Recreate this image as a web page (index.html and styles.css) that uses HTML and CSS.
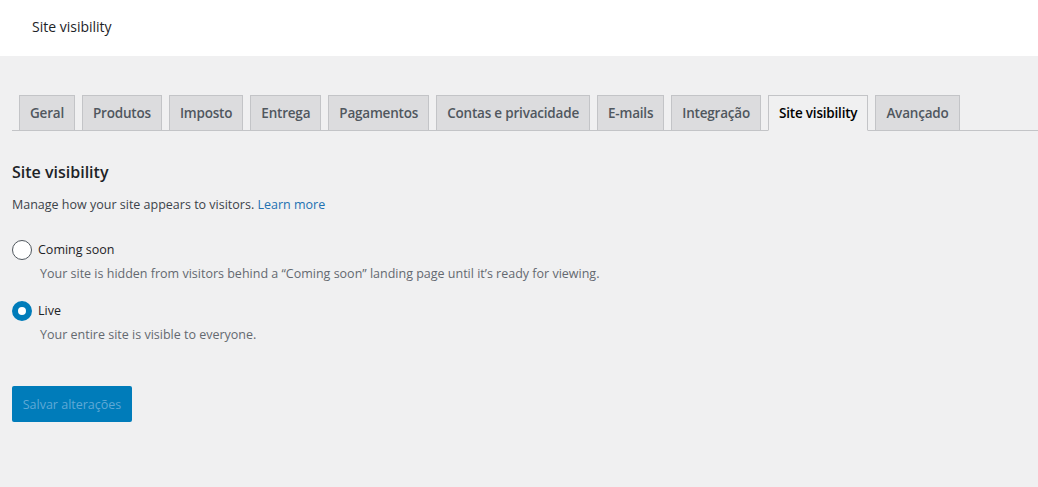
FILE: index.html
```html
<!DOCTYPE html>
<html lang="pt-BR">
<head>
    <meta charset="UTF-8">
    <title>Site visibility</title>
    <link rel="stylesheet" href="styles.css">
</head>
<body>
    <div class="topbar">
        <h1>Site visibility</h1>
    </div>

    <div class="wrap">
        <nav class="nav-tab-wrapper">
            <a class="nav-tab" href="#">Geral</a>
            <a class="nav-tab" href="#">Produtos</a>
            <a class="nav-tab" href="#">Imposto</a>
            <a class="nav-tab" href="#">Entrega</a>
            <a class="nav-tab" href="#">Pagamentos</a>
            <a class="nav-tab" href="#">Contas e privacidade</a>
            <a class="nav-tab" href="#">E-mails</a>
            <a class="nav-tab" href="#">Integração</a>
            <a class="nav-tab nav-tab-active" href="#">Site visibility</a>
            <a class="nav-tab" href="#">Avançado</a>
        </nav>

        <h2>Site visibility</h2>
        <p class="intro">Manage how your site appears to visitors. <a href="#">Learn more</a></p>

        <div class="option">
            <label><span class="radio"></span>Coming soon</label>
            <p class="desc">Your site is hidden from visitors behind a “Coming soon” landing page until it’s ready for viewing.</p>
        </div>
        <div class="option">
            <label><span class="radio checked"></span>Live</label>
            <p class="desc">Your entire site is visible to everyone.</p>
        </div>

        <button class="button-primary" disabled>Salvar alterações</button>
    </div>
</body>
</html>
```

FILE: styles.css
```css
body {
    margin: 0;
    background-color: #f0f0f1;
    font-family: "Open Sans", "Noto Sans", sans-serif;
    font-size: 12.5px;
    color: #3c434a;
}
.topbar {
    background-color: #fff;
    height: 56px;
    box-sizing: border-box;
    display: flex;
    align-items: center;
    padding: 0 0 4px 32px;
}
.topbar h1 {
    margin: 0;
    font-size: 14px;
    font-weight: 500;
    color: #1d2327;
}
.wrap {
    padding: 39px 0 0 12px;
}
.nav-tab-wrapper {
    display: flex;
    border-bottom: 1px solid #c3c4c7;
}
.nav-tab {
    margin-left: 7px;
    margin-bottom: -1px;
    padding: 5px 10px;
    border: 1px solid #c3c4c7;
    background-color: #dcdcde;
    color: #50575e;
    font-size: 13.5px;
    font-weight: 600;
    line-height: 24px;
    letter-spacing: -0.2px;
    text-decoration: none;
    white-space: nowrap;
}
.nav-tab-active {
    background-color: #f0f0f1;
    border-bottom-color: #f0f0f1;
    color: #000;
}
h2 {
    margin: 29px 0 0 0;
    font-size: 16px;
    font-weight: 600;
    color: #1d2327;
    line-height: 24px;
}
.intro {
    margin: 11px 0 0 0;
    line-height: 20px;
}
.intro a {
    color: #2271b1;
    text-decoration: none;
}
.option {
    margin-top: 25px;
}
.option + .option {
    margin-top: 17px;
}
.option label {
    display: flex;
    align-items: center;
    gap: 6px;
    color: #1d2327;
    line-height: 20px;
}
.radio {
    width: 20px;
    height: 20px;
    box-sizing: border-box;
    border: 1px solid #50575e;
    border-radius: 50%;
    background-color: #fff;
}
.radio.checked {
    border: 6px solid #007cba;
}
.desc {
    margin: 4px 0 0 28px;
    color: #646970;
    line-height: 20px;
}
.button-primary {
    margin-top: 41px;
    width: 120px;
    height: 36px;
    border: none;
    border-radius: 2px;
    background-color: #007cba;
    color: #5fa9d6;
    font-family: inherit;
    font-size: 12.5px;
}
```
